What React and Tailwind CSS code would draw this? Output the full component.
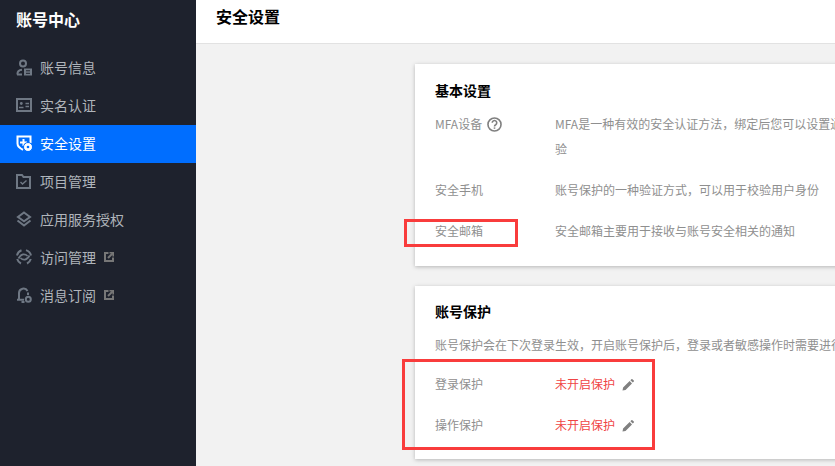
import React from 'react'

const font = 'font-["Noto_Sans_CJK_SC","Noto_Sans",sans-serif]'
const iconGray = '#6f7884'

const UserIcon = () => (
  <svg width="16" height="17" viewBox="0 0 16 17" fill="none" stroke={iconGray} strokeWidth="2">
    <circle cx="7" cy="4.5" r="3" />
    <path d="M1.5 15.500v-1c0-2 1.500-3.500 4.500-3.800M1 15.500h5" />
    <path d="M8 9.500h8v7H8z" fill={iconGray} stroke="none" />
    <path d="M10 11.800h4M10 14.300h4" stroke="#1e222d" strokeWidth="1" />
  </svg>
)

const CardIcon = () => (
  <svg width="16" height="14" viewBox="0 0 16 14" fill="none" stroke={iconGray} strokeWidth="2">
    <rect x="1" y="1" width="14" height="12" />
    <circle cx="5.300" cy="5.500" r="1.400" fill={iconGray} stroke="none" />
    <path d="M3 9.500h4.500M9.500 5.500h3.500M9.500 8.500h3.500" strokeWidth="1.300" />
  </svg>
)

const ShieldIcon = () => (
  <svg width="16" height="16" viewBox="0 0 16 16" fill="none" stroke="#fff" strokeWidth="2">
    <path d="M14.500 8V1.500H1.500v7c0 3 2.500 4.800 5.500 6.300" />
    <path d="M7.500 4v7M4 7.500h7" strokeWidth="2" />
    <circle cx="12" cy="12" r="4.500" fill="#fff" stroke="#006eff" strokeWidth="1" />
    <circle cx="12" cy="12" r="1.300" fill="#006eff" stroke="none" />
  </svg>
)

const FolderIcon = () => (
  <svg width="15" height="15" viewBox="0 0 15 15" fill="none" stroke={iconGray} strokeWidth="2">
    <path d="M1 1h5l1.500 2H14v11H1z" />
    <path d="M4.500 8l2 2 4-3.500" strokeWidth="1.400" />
  </svg>
)

const LayersIcon = () => (
  <svg width="16" height="16" viewBox="0 0 16 16" fill="none" stroke={iconGray} strokeWidth="2">
    <path d="M8 1.500L14 6l-6 4.200L2 6z" />
    <path d="M1.500 9.500L8 14.500l6.500-5" />
  </svg>
)

const SyncIcon = () => (
  <svg width="16" height="16" viewBox="0 0 16 16" fill="none" stroke={iconGray} strokeWidth="2">
    <path d="M1 6.500A7.200 7.200 0 0 1 5.500 1.200M10 1.100A7.200 7.200 0 0 1 15 6.500M1.200 10A7.200 7.200 0 0 0 5 14.500M11 14.500A7.200 7.200 0 0 0 14.800 10" />
    <path d="M2.500 9.500C5 4.500 9 4.500 11.500 7M13.500 6.500C11 11.500 7 11.500 4.500 9" strokeWidth="1.700" />
  </svg>
)

const BellIcon = () => (
  <svg width="16" height="16" viewBox="0 0 16 16" fill="none" stroke={iconGray} strokeWidth="2">
    <path d="M3 12.500V6a4.500 4.500 0 0 1 8.500-2M12 5.500V8M1 12.800h7M5.500 15h3" />
    <circle cx="12.300" cy="12.300" r="2.500" />
  </svg>
)

const LinkIcon = () => (
  <svg width="10" height="10" viewBox="0 0 10 10" fill="none" stroke="#777" strokeWidth="2" className="ml-2">
    <path d="M4.500 1H1v8h8V5.500" />
    <path d="M4 6l5-5" />
    <path d="M5.500 0.800h3.700v3.700" strokeWidth="1.600" />
  </svg>
)

const PencilIcon = () => (
  <svg width="12" height="12" viewBox="0 0 12 12" fill="#808080" className="mt-[2px]">
    <path d="M0.500 11.500l0.600-3L7.600 2l2.400 2.400-6.500 6.500zM8.400 1.200l1-1a0.700 0.700 0 0 1 1 0l1.400 1.400a0.700 0.700 0 0 1 0 1l-1 1z" />
  </svg>
)

const QuestionIcon = () => (
  <svg width="15" height="15" viewBox="0 0 14 14" fill="none" stroke="#808080" strokeWidth="1.500" className="mt-[2px]">
    <circle cx="7" cy="7" r="6.100" />
    <path d="M4.900 5.400a2.100 2.100 0 1 1 3.200 1.800c-.8.400-1.100.8-1.100 1.600" />
    <path d="M7 9.700v1.300" />
  </svg>
)

const menu = [
  { label: '账号信息', icon: UserIcon },
  { label: '实名认证', icon: CardIcon },
  { label: '安全设置', icon: ShieldIcon, active: true },
  { label: '项目管理', icon: FolderIcon },
  { label: '应用服务授权', icon: LayersIcon },
  { label: '访问管理', icon: SyncIcon, external: true },
  { label: '消息订阅', icon: BellIcon, external: true },
]

const Row = ({ label, children, extra }) => (
  <div className="flex pb-4 text-xs leading-[25px]">
    <div className="flex w-[120px] shrink-0 items-center gap-[5px] self-start text-[#8f8f8f]">
      {label}
      {extra}
    </div>
    <div className="whitespace-nowrap text-[#8f8f8f]">{children}</div>
  </div>
)

const Status = () => (
  <div className="flex items-center gap-[7px]">
    <span className="text-[#f04545]">未开启保护</span>
    <PencilIcon />
  </div>
)

export default function App() {
  return (
    <div className={`relative flex h-[466px] w-[835px] overflow-hidden bg-[#f2f2f2] ${font}`}>
      <aside className="w-[196px] shrink-0 bg-[#1e222d]">
        <div className="flex h-[37px] items-center pl-4 text-base leading-none font-bold text-white">账号中心</div>
        <nav className="mt-3">
          {menu.map((item) => (
            <div
              key={item.label}
              className={`flex h-[38px] items-center pb-[2px] pl-4 text-sm ${item.active ? 'bg-[#006eff] text-white' : 'text-[#b0b5bb]'}`}
            >
              <span className="flex w-6 shrink-0 items-center">
                <item.icon />
              </span>
              {item.label}
              {item.external && <LinkIcon />}
            </div>
          ))}
        </nav>
      </aside>

      <main className="min-w-0 flex-1">
        <header className="flex h-[44px] items-center border-b border-[#e2e2e2] bg-white pb-3 pl-5 text-base font-bold text-black">
          安全设置
        </header>

        <div className="w-[620px] pt-5 pl-[219px]">
          <section className="w-[500px] bg-white px-5 pt-4 pb-[7px] shadow-[0_1px_4px_rgba(0,0,0,0.25)]">
            <h2 className="mb-[11px] text-sm leading-5 font-bold text-black">基本设置</h2>
            <Row label="MFA设备" extra={<QuestionIcon />}>
              MFA是一种有效的安全认证方法，绑定后您可以设置通过二次校
              <br />
              验
            </Row>
            <Row label="安全手机">账号保护的一种验证方式，可以用于校验用户身份</Row>
            <Row label="安全邮箱">安全邮箱主要用于接收与账号安全相关的通知</Row>
          </section>

          <section className="mt-5 w-[500px] bg-white px-5 pt-[15px] pb-[6px] shadow-[0_1px_4px_rgba(0,0,0,0.25)]">
            <h2 className="mb-[11px] text-sm leading-5 font-bold text-black">账号保护</h2>
            <p className="mb-[14px] whitespace-nowrap text-xs leading-[25px] text-[#8f8f8f]">
              账号保护会在下次登录生效，开启账号保护后，登录或者敏感操作时需要进行身份验证
            </p>
            <Row label="登录保护"><Status /></Row>
            <Row label="操作保护"><Status /></Row>
          </section>
        </div>
      </main>

      {/* red annotation boxes drawn over the page */}
      <div className="absolute top-[219px] left-[404px] h-[28px] w-[114px] border-[3px] border-[#f93c3c]" />
      <div className="absolute top-[359px] left-[402px] h-[91px] w-[253px] border-[3px] border-[#f93c3c]" />
    </div>
  )
}
